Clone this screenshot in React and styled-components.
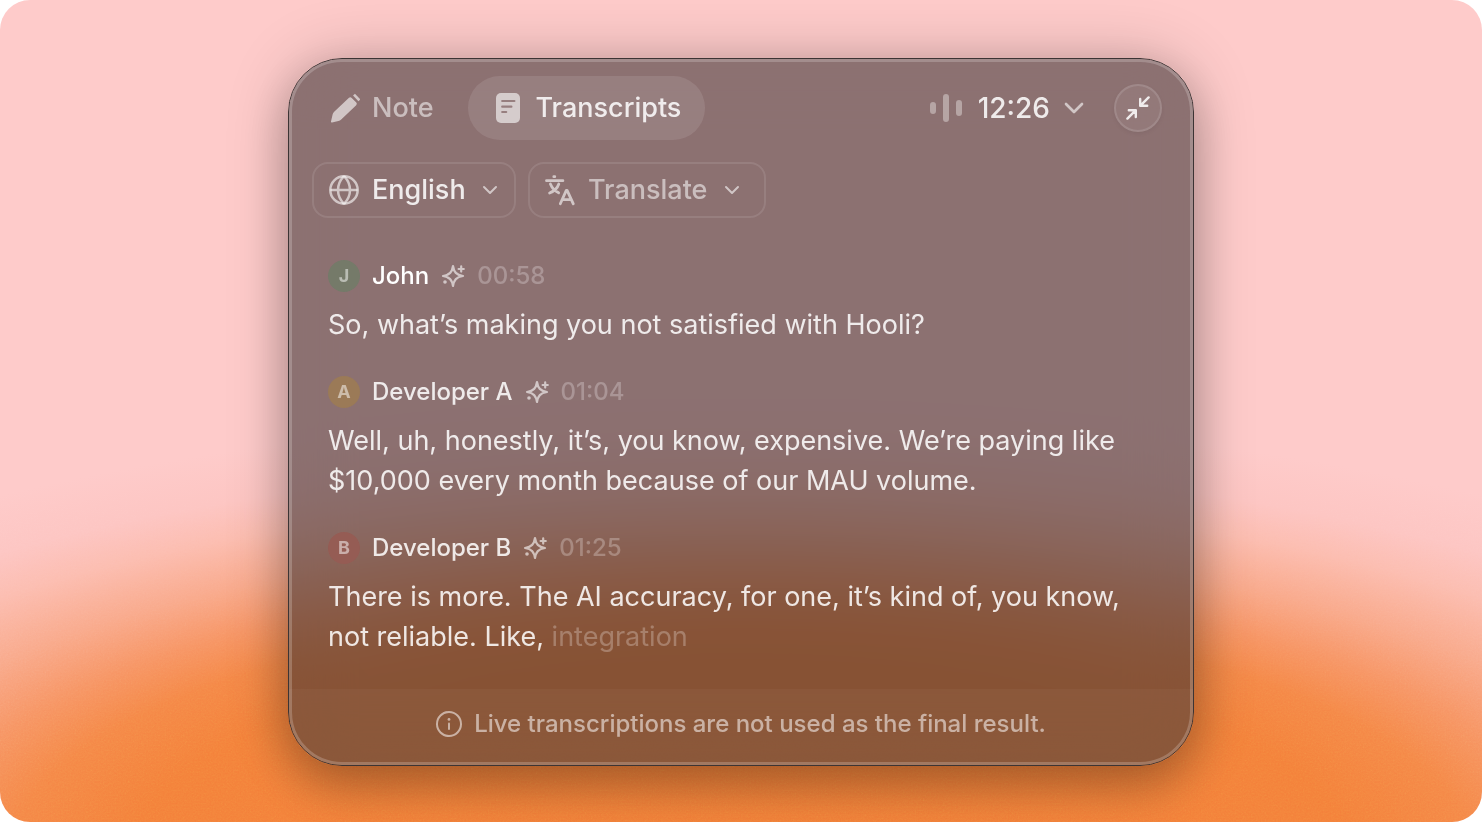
import React from 'react';
import styled, { createGlobalStyle } from 'styled-components';

const FONT = "Inter, 'Liberation Sans', sans-serif";

const COLOR_TEXT = 'rgba(255, 255, 255, 0.86)';
const COLOR_MUTED = 'rgba(255, 255, 255, 0.54)';
const COLOR_FAINT = 'rgba(255, 255, 255, 0.26)';
const COLOR_ICON = 'rgba(255, 255, 255, 0.6)';
const COLOR_LINE = 'rgba(255, 255, 255, 0.1)';

const ENTRIES = [
  {
    initial: 'J',
    name: 'John',
    time: '00:58',
    color: '#757a69',
    editing: true,
    text: 'So, what’s making you not satisfied with Hooli?',
  },
  {
    initial: 'A',
    name: 'Developer A',
    time: '01:04',
    color: '#9b7a57',
    text: 'Well, uh, honestly, it’s, you know, expensive. We’re paying like $10,000 every month because of our MAU volume.',
  },
  {
    initial: 'B',
    name: 'Developer B',
    time: '01:25',
    color: '#955c54',
    text: 'There is more. The AI accuracy, for one, it’s kind of, you know, not reliable. Like, ',
    pending: 'integration',
  },
];

const GlobalStyle = createGlobalStyle`
  *, *::before, *::after {
    box-sizing: border-box;
  }

  body {
    margin: 0;
    background: #fff;
    font-family: ${FONT};
  }

  button, select {
    margin: 0;
    padding: 0;
    border: 0;
    background: none;
    color: inherit;
    font: inherit;
    cursor: pointer;
  }

  h3, p {
    margin: 0;
    font-weight: inherit;
  }

  svg {
    display: block;
    flex: none;
  }
`;

const Stage = styled.main`
  position: relative;
  display: flex;
  align-items: center;
  justify-content: center;
  min-height: 100vh;
  padding: 58px 24px 56px;
  border-radius: 30px;
  overflow: hidden;
  background:
    radial-gradient(
      ellipse 1220px 420px at 50% 860px,
      #f37f38 0%,
      #f4803a 50%,
      #f58747 60%,
      #f79565 68%,
      #f9aa8c 77%,
      #fcbdb0 87%,
      #fdc6c3 95%,
      #fecbca 106%
    );
`;

const Grain = styled.svg`
  position: absolute;
  inset: 0;
  width: 100%;
  height: 100%;
  opacity: 0.18;
  mix-blend-mode: overlay;
  pointer-events: none;
  mask-image: linear-gradient(transparent 56%, #000 90%);
`;

const Card = styled.section`
  position: relative;
  width: 100%;
  max-width: 906px;
  border: 1px solid #3c3434;
  border-radius: 54px;
  background: rgba(52, 44, 46, 0.57);
  background-clip: padding-box;
  backdrop-filter: blur(30px);
  box-shadow: 0 20px 48px rgba(0, 0, 0, 0.24), 0 0 64px rgba(0, 0, 0, 0.2);
  overflow: hidden;
  color: ${COLOR_TEXT};

  &::after {
    content: '';
    position: absolute;
    inset: 0;
    border: 3px solid rgba(255, 255, 255, 0.2);
    border-radius: 53px;
    pointer-events: none;
  }
`;

const Header = styled.header`
  display: flex;
  align-items: center;
  justify-content: space-between;
  padding: 17px 31px 0 15px;
  font-size: 27px;
  font-weight: 500;
  line-height: 40px;
`;

const Tabs = styled.nav`
  display: flex;
  gap: 10px;
`;

const Tab = styled.button`
  display: flex;
  align-items: center;
  gap: 12px;
  height: 64px;
  padding: 0 24px;
  border-radius: 32px;
  background: ${props => (props.$active ? COLOR_LINE : 'transparent')};
  color: ${props => (props.$active ? COLOR_TEXT : COLOR_MUTED)};

  svg {
    color: ${COLOR_ICON};
  }
`;

const Actions = styled.div`
  display: flex;
  align-items: center;
  gap: 24px;
`;

const Timer = styled.button`
  display: flex;
  align-items: center;
  gap: 16px;
  font-size: 28px;
`;

const Elapsed = styled.span`
  display: flex;
  align-items: center;
  gap: 8px;
`;

const Collapse = styled.button`
  display: flex;
  align-items: center;
  justify-content: center;
  width: 48px;
  height: 48px;
  border: 2px solid rgba(255, 255, 255, 0.12);
  border-radius: 50%;
  background: rgba(255, 255, 255, 0.06);
  box-shadow: 0 2px 4px rgba(0, 0, 0, 0.06);
`;

const Filters = styled.div`
  display: flex;
  gap: 12px;
  padding: 22px 23px 0;
`;

const Filter = styled.label`
  display: flex;
  align-items: center;
  gap: 12px;
  height: 56px;
  padding: 0 ${props => (props.$roomy ? '20px' : '12px')} 0 14px;
  border: 2px solid ${COLOR_LINE};
  border-radius: 16px;
  color: ${COLOR_ICON};
`;

const Select = styled.select`
  appearance: none;
  height: 40px;
  color: ${props => (props.$muted ? COLOR_MUTED : COLOR_TEXT)};
  font-size: 27px;
  font-weight: 500;
  line-height: 40px;
`;

const Transcript = styled.ul`
  display: flex;
  flex-direction: column;
  gap: 31px;
  margin: 0;
  padding: 42px 39px 32px;
  list-style: none;
`;

const Speaker = styled.div`
  display: flex;
  align-items: center;
  gap: 12px;
  height: 32px;
  margin-bottom: 13px;
  font-size: 24px;
  font-weight: 500;
  line-height: 32px;
`;

const Avatar = styled.span`
  display: flex;
  align-items: center;
  justify-content: center;
  width: 32px;
  height: 32px;
  border-radius: 50%;
  background: ${props => props.$color};
  color: rgba(255, 255, 255, 0.5);
  font-size: 18px;
  font-weight: 700;
`;

const Name = styled.h3`
  color: ${props => (props.$editing ? '#fff' : COLOR_TEXT)};
  font-size: 24px;
`;

const Time = styled.time`
  color: ${COLOR_FAINT};
`;

const Text = styled.p`
  font-size: 27px;
  line-height: 40px;
`;

const Pending = styled.span`
  color: ${COLOR_FAINT};
`;

const Footer = styled.footer`
  display: flex;
  align-items: center;
  justify-content: center;
  gap: 12px;
  min-height: 76px;
  padding: 0 24px 6px;
  background: rgba(255, 255, 255, 0.03);
  color: ${COLOR_MUTED};
  font-size: 24px;
  font-weight: 500;
  line-height: 32px;
`;

const PencilIcon = () => (
  <svg width="32" height="32" viewBox="0 0 32 32" fill="currentColor" aria-hidden="true">
    <path d="M3 29.6 4.6 22.6Q5 21 6.200 19.800L21 5.800Q22.400 4.600 23.700 5.900L28.300 10.600Q29.500 11.900 28.200 13.200L13.200 27.400Q12 28.500 10.400 28.900L4 30.500Q2.800 30.700 3 29.600Z" />
    <path d="m26 2.600 5.400 5.700" stroke="currentColor" strokeWidth="2.600" />
  </svg>
);

const DocumentIcon = () => (
  <svg width="32" height="32" viewBox="0 0 32 32" aria-hidden="true">
    <mask id="document-lines">
      <rect x="4" y="1" width="24" height="30" rx="5" fill="#fff" />
      <path d="M10.200 9h12.200M10.200 14.700h9.200M10.200 20h4" stroke="#000" strokeWidth="2.200" strokeLinecap="round" />
    </mask>
    <rect width="32" height="32" fill="currentColor" mask="url(#document-lines)" />
  </svg>
);

const GlobeIcon = () => (
  <svg width="32" height="32" viewBox="0 0 32 32" fill="none" stroke="currentColor" strokeWidth="2.500" aria-hidden="true">
    <circle cx="16" cy="16" r="13.700" />
    <path d="M2.500 16h27M16 2.200c-8 8-8 19.600 0 27.600M16 2.200c8 8 8 19.600 0 27.600" />
  </svg>
);

const TranslateIcon = () => (
  <svg width="32" height="32" viewBox="0 0 32 32" fill="none" stroke="currentColor" strokeWidth="2.800" strokeLinecap="round" strokeLinejoin="round" aria-hidden="true">
    <path d="M2.500 6.700h16.400M9.800 2.700h1M14.800 10C13.500 14 10 17.200 5.600 19M6.400 10c1.600 4 4.400 7 8.200 8.800M16.300 29.800l6-13.400h.8l6.200 13.400M18.500 25.600h8.800" />
  </svg>
);

const BarsIcon = () => (
  <svg width="32" height="32" viewBox="0 0 32 32" fill="rgba(255, 255, 255, 0.36)" aria-hidden="true">
    <rect x="0" y="10" width="6" height="12" rx="3" />
    <rect x="13" y="2" width="6" height="28" rx="3" />
    <rect x="26" y="8" width="6" height="16" rx="3" />
  </svg>
);

const ChevronIcon = ({ size = 24 }) => (
  <svg width={size} height={size} viewBox="0 0 24 24" fill="none" stroke={COLOR_ICON} strokeWidth="2" strokeLinecap="round" strokeLinejoin="round" aria-hidden="true">
    <path d="m6 9 6 6 6-6" />
  </svg>
);

const CollapseIcon = () => (
  <svg width="24" height="24" viewBox="0 0 24 24" fill="none" stroke="currentColor" strokeWidth="2.400" strokeLinecap="round" strokeLinejoin="round" aria-hidden="true">
    <path d="m22.600 1.400-8.400 8.400M14.200 3v6.800h7M1.400 22.600l8.400-8.400M2.800 14.200h7v6.800" />
  </svg>
);

const SparkleIcon = () => (
  <svg width="24" height="24" viewBox="0 0 24 24" fill="none" stroke={COLOR_ICON} strokeWidth="2.200" strokeLinecap="round" strokeLinejoin="round" aria-hidden="true">
    <path d="M12 2c1 6.200 3.200 8.800 10 10-6.800 1.200-9 3.800-10 10-1-6.200-3.200-8.800-10-10 6.800-1.200 9-3.800 10-10Z" />
    <path d="M20.200 2.400v5.200M17.600 5h5.200" />
    <circle cx="4" cy="18" r="1.800" fill={COLOR_ICON} stroke="none" />
  </svg>
);

const InfoIcon = () => (
  <svg width="26" height="26" viewBox="0 0 26 26" fill="none" stroke="currentColor" strokeWidth="2" strokeLinecap="round" aria-hidden="true">
    <circle cx="13" cy="13" r="12" />
    <path d="M13 12.500v5.500" />
    <circle cx="13" cy="8.400" r="1.400" fill="currentColor" stroke="none" />
  </svg>
);

const Entry = ({ initial, name, time, color, editing, text, pending }) => (
  <li>
    <Speaker>
      <Avatar $color={color}>{initial}</Avatar>
      <Name $editing={editing}>{name}</Name>
      <SparkleIcon />
      <Time>{time}</Time>
    </Speaker>
    <Text>
      {text}
      {pending && <Pending>{pending}</Pending>}
    </Text>
  </li>
);

const App = () => (
  <>
    <GlobalStyle />
    <Stage>
      <Grain aria-hidden="true">
        <filter id="grain">
          <feTurbulence type="fractalNoise" baseFrequency="0.6" numOctaves="2" />
          <feColorMatrix type="saturate" values="0" />
        </filter>
        <rect width="100%" height="100%" filter="url(#grain)" />
      </Grain>
      <Card>
        <Header>
          <Tabs>
            <Tab type="button">
              <PencilIcon />
              Note
            </Tab>
            <Tab type="button" $active>
              <DocumentIcon />
              Transcripts
            </Tab>
          </Tabs>
          <Actions>
            <Timer type="button">
              <BarsIcon />
              <Elapsed>
                12:26
                <ChevronIcon size={32} />
              </Elapsed>
            </Timer>
            <Collapse type="button" aria-label="Collapse">
              <CollapseIcon />
            </Collapse>
          </Actions>
        </Header>
        <Filters>
          <Filter>
            <GlobeIcon />
            <Select aria-label="Language">
              <option>English</option>
            </Select>
            <ChevronIcon />
          </Filter>
          <Filter $roomy>
            <TranslateIcon />
            <Select aria-label="Translate to" $muted>
              <option>Translate</option>
            </Select>
            <ChevronIcon />
          </Filter>
        </Filters>
        <Transcript>
          {ENTRIES.map(entry => (
            <Entry key={entry.time} {...entry} />
          ))}
        </Transcript>
        <Footer>
          <InfoIcon />
          Live transcriptions are not used as the final result.
        </Footer>
      </Card>
    </Stage>
  </>
);

export default App;
